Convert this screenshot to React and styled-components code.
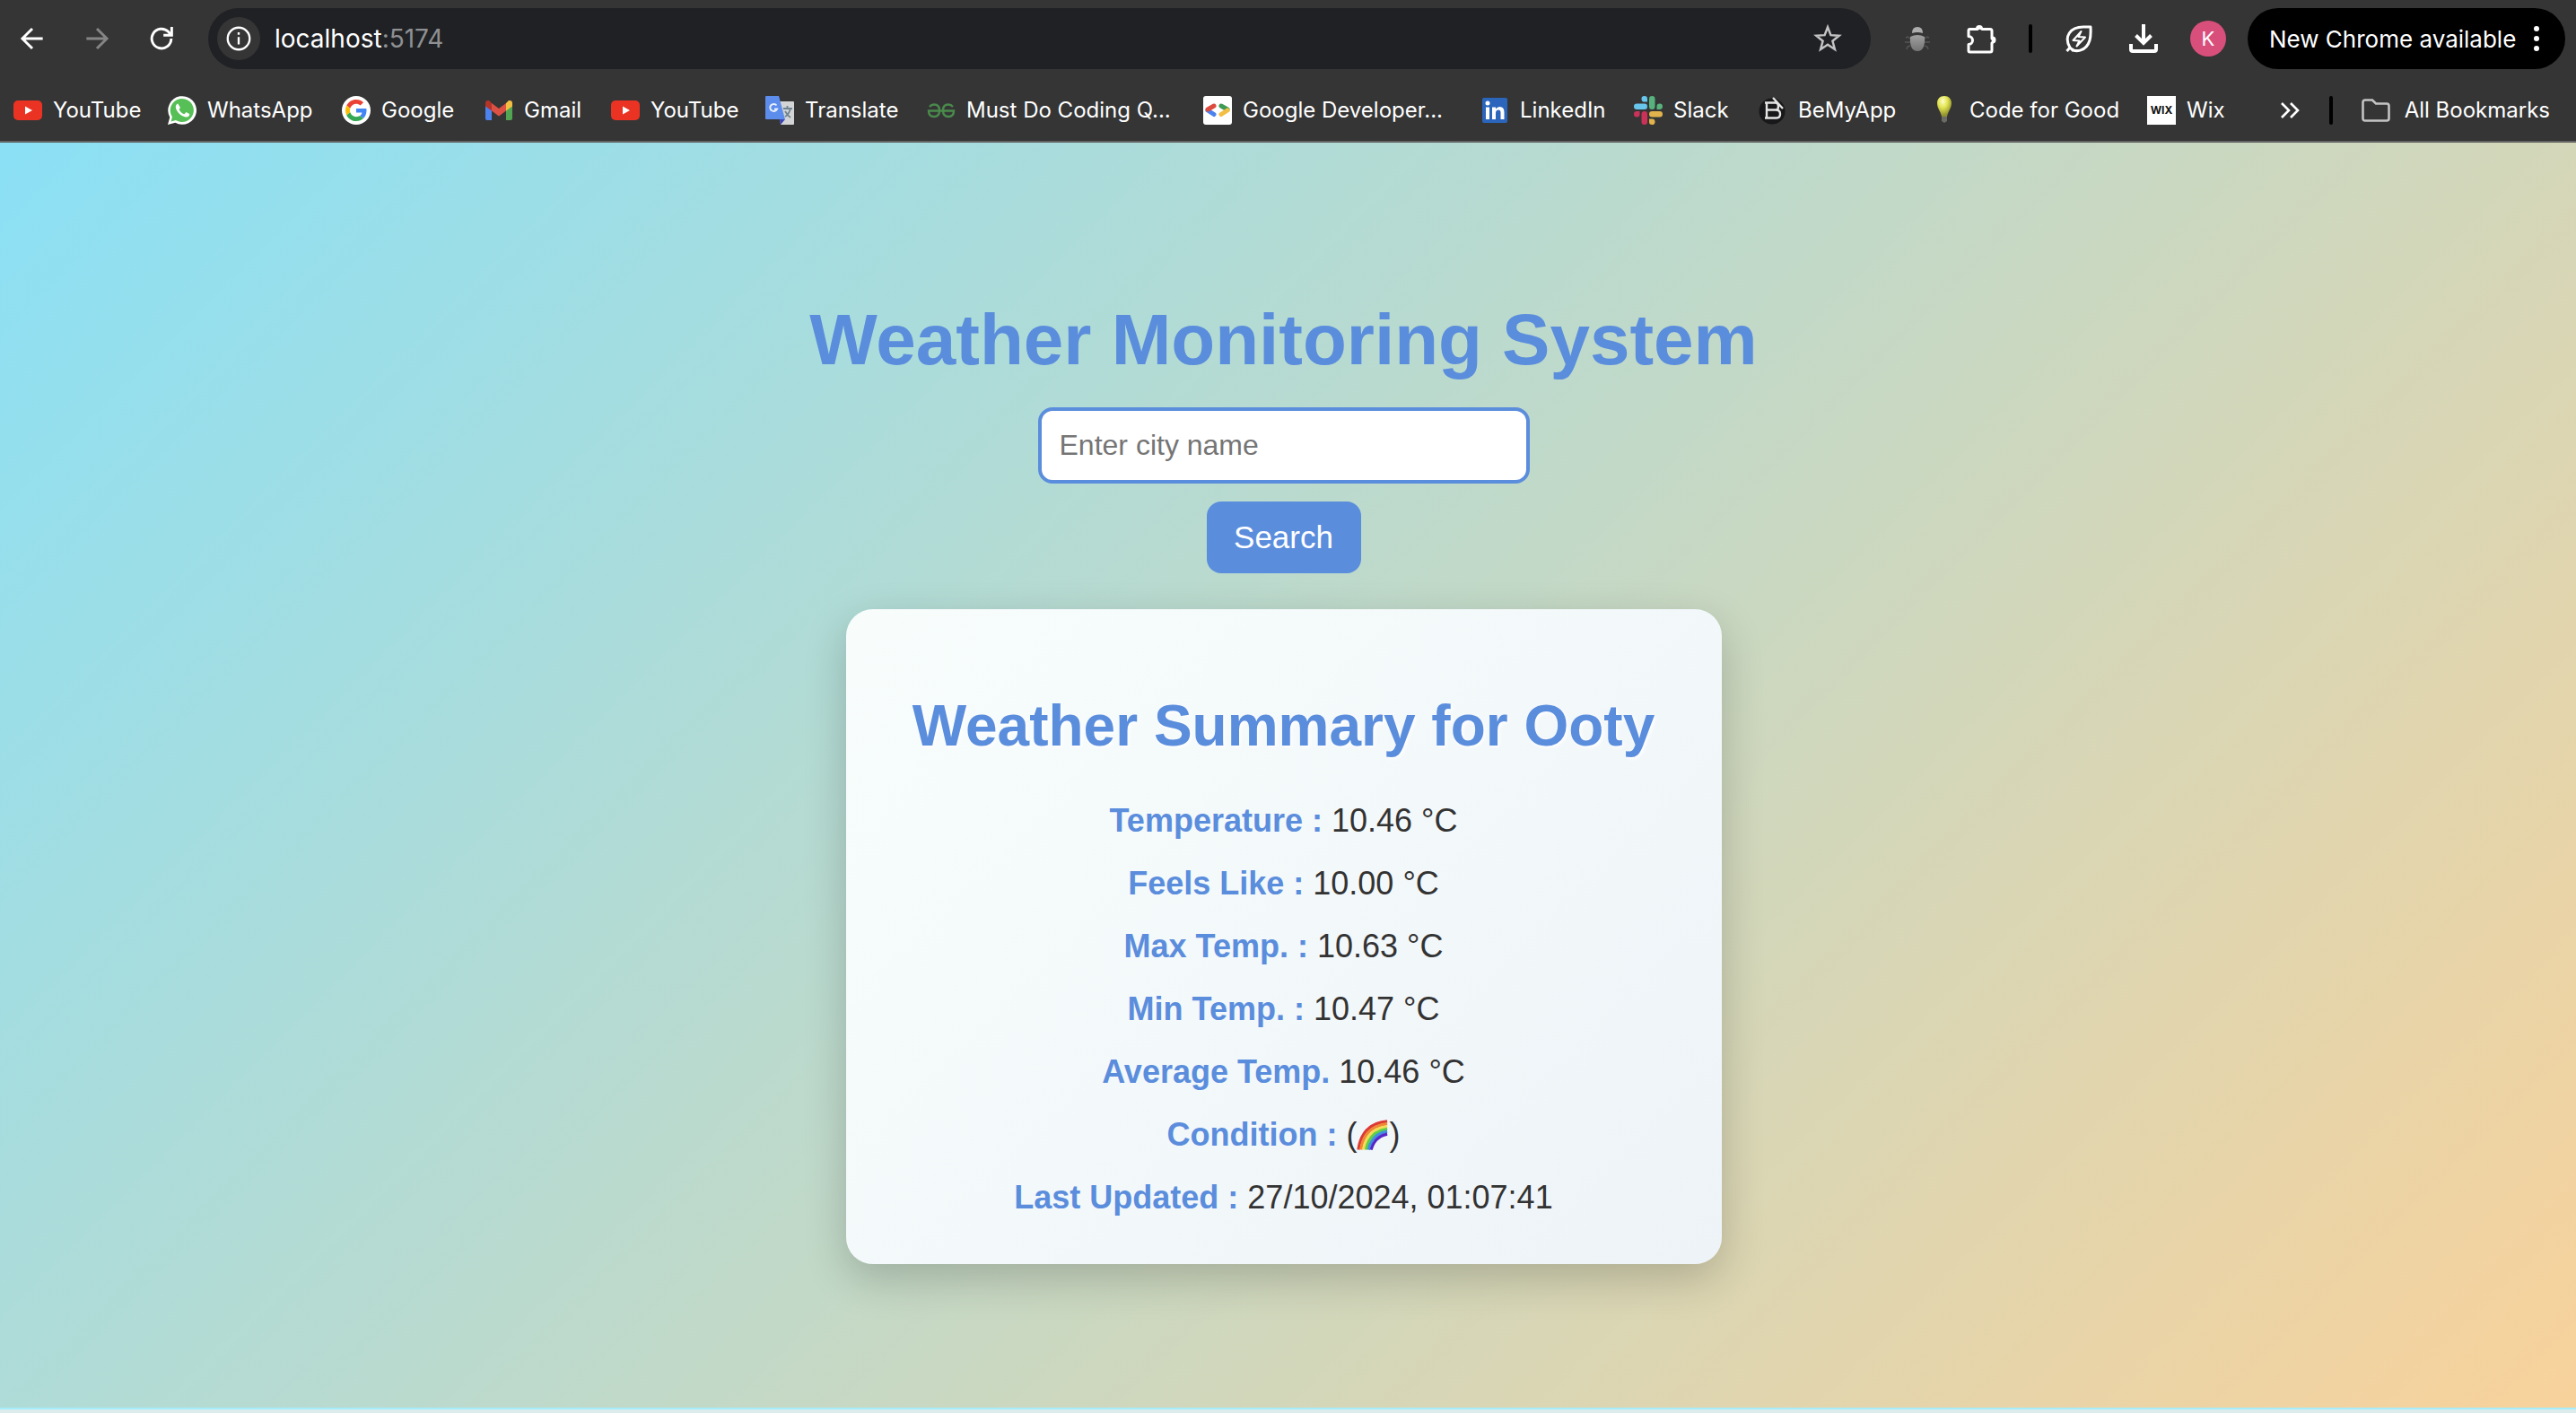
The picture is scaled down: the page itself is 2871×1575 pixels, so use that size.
import React from "react";
import styled, { createGlobalStyle } from "styled-components";

const Global = createGlobalStyle`
  * { box-sizing: border-box; }
  html, body { margin: 0; }
  body { background: #dcebec; }
  #root { min-height: 100vh; display: flex; flex-direction: column; }
`;

const uiFont = `Inter, Roboto, "Liberation Sans", sans-serif`;
const pageFont = `"Liberation Sans", Arial, Helvetica, sans-serif`;

const Browser = styled.header`
  background: #353535;
  border-bottom: 2px solid #636363;
  font-family: ${uiFont};
  color: #fff;
`;
const Toolbar = styled.div`
  display: flex;
  align-items: center;
  height: 86px;
  padding: 0 12px 0 0;
`;
const IconButton = styled.button`
  display: flex;
  align-items: center;
  justify-content: center;
  flex: none;
  width: ${(p) => p.$w || 72}px;
  height: 56px;
  padding: 0;
  border: 0;
  background: none;
  color: ${(p) => p.$color || "#fff"};
`;
const NavGroup = styled.nav`
  display: flex;
  margin-right: 16px;
`;
const Omnibox = styled.form`
  display: flex;
  align-items: center;
  flex: 1;
  height: 68px;
  padding: 0 16px 0 10px;
  border-radius: 34px;
  background: #202125;
`;
const InfoButton = styled(IconButton)`
  width: 48px;
  height: 48px;
  border-radius: 50%;
  background: #353535;
`;
const Address = styled.a`
  flex: 1;
  padding-left: 16px;
  font-size: 28px;
  color: #fff;
  text-decoration: none;
`;
const Port = styled.span`
  color: #8f9093;
`;
const Tools = styled.div`
  display: flex;
  align-items: center;
  padding-left: 16px;
`;
const Divider = styled.span`
  flex: none;
  width: 4px;
  height: 32px;
  margin-left: ${(p) => p.$before || 0}px;
  margin-right: ${(p) => p.$after || 0}px;
  border-radius: 2px;
  background: #000;
`;
const Avatar = styled.button`
  width: 40px;
  height: 40px;
  margin: 0 24px 0 32px;
  padding: 0;
  border: 0;
  border-radius: 50%;
  background: #d94f7c;
  color: #fff;
  font: 22px ${uiFont};
`;
const UpdateButton = styled.button`
  display: flex;
  align-items: center;
  justify-content: space-between;
  width: 354px;
  height: 68px;
  padding: 0 28px 0 24px;
  border: 0;
  border-radius: 34px;
  background: #000;
  color: #fff;
  font: 400 26px ${uiFont};
  white-space: nowrap;
`;
const Bookmarks = styled.nav`
  display: flex;
  align-items: center;
  height: 71px;
  padding: 4px 29px 2px 15px;
`;
const Bookmark = styled.a`
  display: flex;
  align-items: center;
  gap: ${(p) => p.$gap || 12}px;
  flex: none;
  width: ${(p) => (p.$w ? p.$w + "px" : "auto")};
  color: #fff;
  font-size: 24px;
  font-weight: 400;
  text-decoration: none;
  white-space: nowrap;
`;
const Spacer = styled.span`
  flex: 1;
`;

const Page = styled.main`
  display: flex;
  flex: 1;
  flex-direction: column;
  align-items: center;
  margin-bottom: 4px;
  padding: 168px 20px 0 10px;
  border-bottom: 2px solid #a6edfb;
  background: linear-gradient(135deg, #8be0f5 0%, #f8d29b 100%);
  font-family: ${pageFont};
  color: #333;
`;
const Title = styled.h1`
  margin: 0;
  font-size: 80px;
  line-height: 104px;
  color: #5b8ddd;
`;
const SearchForm = styled.form`
  display: flex;
  flex-direction: column;
  align-items: center;
  gap: 20px;
  margin-top: 23px;
`;
const CityInput = styled.input`
  width: 548px;
  height: 85px;
  padding: 0 20px;
  border: 4px solid #5b8ddd;
  border-radius: 16px;
  background: #fff;
  color: #333;
  font: 32px ${pageFont};
  &::placeholder { color: #757575; }
`;
const SearchButton = styled.button`
  width: 172px;
  height: 80px;
  border: 0;
  border-radius: 16px;
  background: #5b8ddd;
  color: #fff;
  font: 35px ${pageFont};
`;
const Card = styled.section`
  width: 976px;
  margin-top: 40px;
  padding: 80px 40px 24px;
  border-radius: 30px;
  background: linear-gradient(135deg, #f8fdfc 0%, #eef3f8 100%);
  box-shadow: 0 16px 48px rgba(0, 0, 0, 0.2);
  text-align: center;
`;
const CardTitle = styled.h2`
  margin: 0 0 36px;
  font-size: 64px;
  line-height: 100px;
  color: #5b8ddd;
  text-shadow: 2px 2px 4px #fff;
`;
const Readings = styled.dl`
  margin: 0;
`;
const Reading = styled.div`
  display: flex;
  justify-content: center;
  gap: 10px;
  font-size: 36px;
  line-height: 40px;
  height: 40px;
  margin-bottom: 30px;
`;
const Label = styled.dt`
  font-weight: bold;
  color: #5b8ddd;
`;
const Value = styled.dd`
  display: flex;
  align-items: center;
  margin: 0;
  color: #333;
`;

const Svg = ({ s = 32, w, box = "0 0 24 24", children, ...rest }) => (
  <svg width={w || s} height={s} viewBox={box} fill="none" aria-hidden="true" {...rest}>
    {children}
  </svg>
);
const line = { stroke: "currentColor", strokeWidth: 2 };

const BackIcon = () => (
  <Svg s={28}><path d="M22 12H3M12 2.500L2.500 12l9.500 9.500" {...line} strokeWidth="2.500" /></Svg>
);
const ForwardIcon = () => (
  <Svg s={28}><path d="M2 12h19M12 2.500l9.500 9.500-9.500 9.500" {...line} strokeWidth="2.500" /></Svg>
);
const ReloadIcon = () => (
  <Svg s={26}>
    <path d="M22 12a10 10 0 1 1-3-7.100L21.500 8" {...line} strokeWidth="2.700" />
    <path d="M22.500 0v8.500H14" {...line} strokeWidth="2.700" />
  </Svg>
);
const InfoIcon = () => (
  <Svg s={28}>
    <circle cx="12" cy="12" r="10.500" {...line} />
    <path d="M12 10.500v7M12 6v2.300" {...line} />
  </Svg>
);
const StarIcon = () => (
  <Svg s={34}>
    <path d="M12 3l2.400 6.300 6.600.4-5.200 4.200 1.800 6.600L12 16.800l-5.600 3.700 1.800-6.600L3 9.700l6.600-.4z" {...line} strokeWidth="1.700" />
  </Svg>
);
const BugIcon = () => (
  <Svg s={32} box="0 0 32 32">
    <defs>
      <linearGradient id="bug" x1="0" y1="0" x2="0" y2="1">
        <stop offset="0" stopColor="#a0a0a0" />
        <stop offset="1" stopColor="#747474" />
      </linearGradient>
    </defs>
    <path d="M8 16l-3-2-2 1M24 16l3-2 2 1M8 20H2M24 20h6M8 24l-3 1-1 3M24 24l3 1 1 3" stroke="#555" strokeWidth="1.500" />
    <path d="M10 10q0-7 6-7t6 7q-6-2-12 0z" fill="#adadad" />
    <path d="M8 14q8-4 16 0 1 16-8 16T8 14z" fill="url(#bug)" />
  </Svg>
);
const PuzzleIcon = () => (
  <Svg s={34} box="0 0 34 34">
    <path d="M3.500 6.500h8.500a3 3 0 0 1 5 0h9q2 0 2 2v8.500a3 3 0 0 1 0 5V30q0 2-2 2H3.500q-1.500 0-1.500-1.500v-7a4.500 4.500 0 0 0 0-9V8q0-1.500 1.500-1.500z" {...line} strokeWidth="3" strokeLinejoin="round" />
    <path d="M10 6a4 4 0 0 1 8 0zM28.500 14.500a4 4 0 0 1 0 8z" fill="currentColor" />
  </Svg>
);
const LeafIcon = () => (
  <Svg s={32} box="0 0 32 32">
    <path d="M2.500 30l3.500-4C-1 14 6 3 21 3h8q.500 10-1 15C24 31 11 32 6 26l4 4" {...line} strokeWidth="3" strokeLinejoin="round" />
    <path d="M18.500 8l-9 10 7 .500-3 6 9.500-10-7.500-.500z" stroke="currentColor" strokeWidth="2" strokeLinejoin="round" />
  </Svg>
);
const DownloadIcon = () => (
  <Svg s={34} box="0 0 34 34">
    <path d="M17 1v20M8.500 13.500L17 22l8.500-8.500" {...line} strokeWidth="4" />
    <path d="M3 23v6q0 2 2 2h24q2 0 2-2v-6" {...line} strokeWidth="4" />
  </Svg>
);
const DotsIcon = () => (
  <Svg s={28} w={8} box="0 0 8 28">
    {[3, 14, 25].map((y) => <circle key={y} cx="4" cy={y} r="3" fill="#fff" />)}
  </Svg>
);
const YouTubeIcon = () => (
  <Svg s={32} box="0 0 32 32">
    <rect x="0" y="5" width="32" height="22" rx="5" fill="#ea3323" />
    <path d="M13 11.500l8 4.500-8 4.500z" fill="#fff" />
  </Svg>
);
const WhatsAppIcon = () => (
  <Svg s={32}>
    <path d="M0 24l1.700-6.200A11.900 11.900 0 1 1 6.300 22.400z" fill="#fff" />
    <path d="M2.700 21.300l1-3.900a9.800 9.800 0 1 1 3 2.900z" fill="#56bf55" />
    <path d="M8.500 6.300c-.5 0-2 1-1.900 2.900.2 4 5.700 8.700 9.200 8.500 1.600-.2 2.500-1.400 2.400-2.700l-2.900-1.500-1.500 1.700c-2-.7-3.500-2-4.400-4l1.100-1.500z" fill="#fff" />
  </Svg>
);
const GoogleIcon = () => (
  <Svg s={32} box="0 0 48 48">
    <circle cx="24" cy="24" r="24" fill="#fff" />
    <g transform="translate(6 6) scale(.75)">
      <path fill="#ea4335" d="M24 9.500c3.540 0 6.710 1.220 9.210 3.600l6.850-6.850C35.900 2.380 30.470 0 24 0 14.620 0 6.510 5.380 2.560 13.220l7.980 6.190C12.430 13.720 17.740 9.500 24 9.500z" />
      <path fill="#4285f4" d="M46.980 24.550c0-1.570-.15-3.090-.38-4.550H24v9.020h12.940c-.58 2.960-2.260 5.480-4.780 7.180l7.730 6c4.510-4.180 7.090-10.360 7.090-17.650z" />
      <path fill="#fbbc05" d="M10.530 28.590c-.48-1.450-.76-2.990-.76-4.590s.27-3.140.76-4.590l-7.980-6.190C.92 16.460 0 20.120 0 24s.92 7.540 2.560 10.780l7.970-6.190z" />
      <path fill="#34a853" d="M24 48c6.480 0 11.930-2.130 15.890-5.810l-7.730-6c-2.150 1.450-4.920 2.300-8.160 2.300-6.260 0-11.570-4.220-13.470-9.910l-7.980 6.190C6.510 42.620 14.620 48 24 48z" />
    </g>
  </Svg>
);
const GmailIcon = () => (
  <Svg s={32} box="0 0 32 32">
    <path d="M1 8v17q0 2 2 2h5V13z" fill="#4d82ee" />
    <path d="M31 8v17q0 2-2 2h-5V13z" fill="#52a552" />
    <path d="M8 8l8 6 8-6v8.500l-8 6-8-6z" fill="#dc5144" />
    <path d="M1 8q0-3 3-3h1l3 3v8.500l-7-5z" fill="#b43428" />
    <path d="M31 8q0-3-3-3h-1l-3 3v8.500l7-5z" fill="#f2bf42" />
  </Svg>
);
const TranslateIcon = () => (
  <Svg s={32} box="0 0 32 32">
    <path d="M14 6h17q1 0 1 1v24q0 1-1 1H17z" fill="#d3d4d5" />
    <path d="M16 26h6l-5 6z" fill="#3a45b5" />
    <path d="M1 0h14l7 26H1q-1 0-1-1V1q0-1 1-1z" fill="#5c8ded" />
    <path d="M12.500 10.500a4 4 0 1 0 .5 4h-3" stroke="#e6eefc" strokeWidth="2" />
    <path d="M20 14h10M24.500 11v3M28 14q-2 7-6 9M22 17q3 5 6 7" stroke="#6f8390" strokeWidth="1.800" />
  </Svg>
);
const GfgIcon = () => (
  <Svg s={32} box="0 0 32 32">
    <path d="M3 12Q5 9.500 8 9.500q6 0 6 6.500 0 7-6 7t-6-6.500h28q0 6.500-6 6.500t-6-7q0-6.500 6-6.500 3 0 5 2.500" stroke="#4a8a4c" strokeWidth="2.400" />
  </Svg>
);
const GdgIcon = () => (
  <Svg s={32} box="0 0 32 32">
    <rect width="32" height="32" rx="3" fill="#fff" />
    <g strokeWidth="5" strokeLinecap="round">
      <path d="M5 16l7 4.500" stroke="#4d82ee" />
      <path d="M5 15l7-4" stroke="#dc4c3e" />
      <path d="M20 11l7 4" stroke="#3f9a52" />
      <path d="M20 20.500l7-4.500" stroke="#f2bf42" />
    </g>
  </Svg>
);
const LinkedInIcon = () => (
  <Svg s={32} box="0 0 32 32">
    <rect x="2" y="2" width="28" height="28" rx="2" fill="#2b66bc" />
    <circle cx="8" cy="8" r="2.500" fill="#fff" />
    <path d="M6 12.500h4V26H6zM13 12.500h4v2q1.500-2.500 4.500-2.500 5 0 5 6v8h-4v-7.500q0-3-2.500-3-3 0-3 3.500v7h-4z" fill="#fff" />
  </Svg>
);
const SlackIcon = () => (
  <Svg s={32} box="0 0 32 32">
    <g fill="#68c5ec"><rect y="8.500" width="15" height="6.500" rx="3.250" /><path d="M15 6.500h-3A3.250 3.250 0 1 1 15 3.200z" /></g>
    <g fill="#57b27e"><rect x="17" width="6.500" height="15" rx="3.250" /><path d="M25.500 15v-3a3.250 3.250 0 1 1 3.250 3z" /></g>
    <g fill="#e2b34c"><rect x="17" y="17" width="15" height="6.500" rx="3.250" /><path d="M17 25.500h3A3.250 3.250 0 1 1 17 28.700z" /></g>
    <g fill="#cb3159"><rect x="8.500" y="17" width="6.500" height="15" rx="3.250" /><path d="M6.500 17v3a3.250 3.250 0 1 1-3.250-3z" /></g>
  </Svg>
);
const BeMyAppIcon = () => (
  <Svg s={32} box="0 0 32 32">
    <circle cx="15" cy="17" r="14.500" fill="#18181a" />
    <path d="M7 7.500h12q3 0 3 4t-3 4q5 0 5 4.500t-4 4.500H7M9 7.500V25M9 15.500h11M16 2l11 12" stroke="#e4e4e4" strokeWidth="2.400" />
  </Svg>
);
const BulbIcon = () => (
  <Svg s={32} box="0 0 32 32">
    <defs>
      <radialGradient id="glow" cx=".4" cy=".25" r=".7">
        <stop offset="0" stopColor="#fdfdcf" />
        <stop offset=".45" stopColor="#e3e552" />
        <stop offset="1" stopColor="#8f9030" />
      </radialGradient>
    </defs>
    <path d="M16 0c5 0 8 3.500 8 8 0 6-4 9-5 15h-6C12 17 8 14 8 8c0-4.500 3-8 8-8z" fill="url(#glow)" />
    <path d="M13 23h6v5l-3 2-3-2z" fill="#6b6b66" />
  </Svg>
);
const WixMark = styled.span`
  display: flex;
  align-items: center;
  justify-content: center;
  width: 32px;
  height: 32px;
  background: #fff;
  color: #111;
  font: 700 12px ${uiFont};
`;
const WixIcon = () => <WixMark aria-hidden="true">WIX</WixMark>;
const MoreIcon = () => (
  <Svg s={24}><path d="M3 4l8 8-8 8M13 4l8 8-8 8" {...line} strokeWidth="2.600" /></Svg>
);
const FolderIcon = () => (
  <Svg s={32} box="0 0 32 32">
    <path d="M1.500 7q0-2.500 2.500-2.500h8l4 4h12q2.500 0 2.500 2.500v14q0 2.500-2.500 2.500H4q-2.500 0-2.500-2.500z" stroke="#c4c4c4" strokeWidth="2.600" />
  </Svg>
);
const RainbowIcon = () => (
  <svg width="36" height="36" viewBox="1 0 38 36" fill="none" role="img" aria-label="rainbow">
    {["#dd3a35", "#ef8a35", "#f6dc55", "#5fd044", "#3f8ee0", "#5626c8"].map((c, i) => (
      <path key={c} d={`M${3 + i * 3} 35.500Q${7 + i * 3} ${5 + i * 3} 37 ${2 + i * 3}`} stroke={c} strokeWidth="3.400" />
    ))}
  </svg>
);

const bookmarks = [
  ["YouTube", YouTubeIcon, 172],
  ["WhatsApp", WhatsAppIcon, 194],
  ["Google", GoogleIcon, 159],
  ["Gmail", GmailIcon, 141],
  ["YouTube", YouTubeIcon, 172],
  ["Translate", TranslateIcon, 180],
  ["Must Do Coding Q...", GfgIcon, 308],
  ["Google Developer...", GdgIcon, 309],
  ["LinkedIn", LinkedInIcon, 171],
  ["Slack", SlackIcon, 139],
  ["BeMyApp", BeMyAppIcon, 191],
  ["Code for Good", BulbIcon, 242],
  ["Wix", WixIcon, 0],
];

const readings = [
  ["Temperature :", "10.46 °C"],
  ["Feels Like :", "10.00 °C"],
  ["Max Temp. :", "10.63 °C"],
  ["Min Temp. :", "10.47 °C"],
  ["Average Temp.", "10.46 °C"],
  ["Condition :", <>(<RainbowIcon />)</>],
  ["Last Updated :", "27/10/2024, 01:07:41"],
];

export default function App() {
  return (
    <>
      <Global />
      <Browser>
        <Toolbar>
          <NavGroup>
            <IconButton aria-label="Back"><BackIcon /></IconButton>
            <IconButton aria-label="Forward" $color="#858585"><ForwardIcon /></IconButton>
            <IconButton aria-label="Reload"><ReloadIcon /></IconButton>
          </NavGroup>
          <Omnibox onSubmit={(e) => e.preventDefault()}>
            <InfoButton type="button" aria-label="Site information"><InfoIcon /></InfoButton>
            <Address href="#">localhost<Port>:5174</Port></Address>
            <IconButton type="button" aria-label="Bookmark this tab" $w={64} $color="#c4c4c4"><StarIcon /></IconButton>
          </Omnibox>
          <Tools>
            <IconButton aria-label="Debugger"><BugIcon /></IconButton>
            <IconButton aria-label="Extensions"><PuzzleIcon /></IconButton>
            <Divider $before={16} />
            <IconButton aria-label="Energy saver" $w={104}><LeafIcon /></IconButton>
            <IconButton aria-label="Downloads" $w={40}><DownloadIcon /></IconButton>
            <Avatar aria-label="Profile K">K</Avatar>
          </Tools>
          <UpdateButton>New Chrome available<DotsIcon /></UpdateButton>
        </Toolbar>
        <Bookmarks>
          {bookmarks.map(([name, Icon, w], i) => (
            <Bookmark key={i} href="#" $w={w}><Icon />{name}</Bookmark>
          ))}
          <Spacer />
          <IconButton aria-label="More bookmarks" $w={88}><MoreIcon /></IconButton>
          <Divider $after={32} />
          <Bookmark href="#" $gap={16}><FolderIcon />All Bookmarks</Bookmark>
        </Bookmarks>
      </Browser>
      <Page>
        <Title>Weather Monitoring System</Title>
        <SearchForm onSubmit={(e) => e.preventDefault()}>
          <CityInput type="text" placeholder="Enter city name" aria-label="City name" />
          <SearchButton type="submit">Search</SearchButton>
        </SearchForm>
        <Card>
          <CardTitle>Weather Summary for Ooty</CardTitle>
          <Readings>
            {readings.map(([label, value]) => (
              <Reading key={label}><Label>{label}</Label><Value>{value}</Value></Reading>
            ))}
          </Readings>
        </Card>
      </Page>
    </>
  );
}
